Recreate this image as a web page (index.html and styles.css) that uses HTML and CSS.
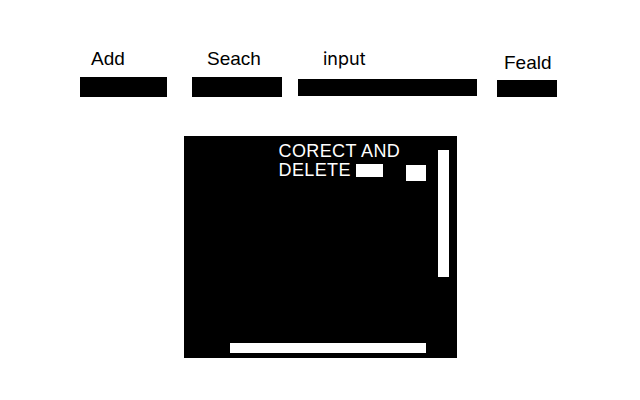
FILE: index.html
```html
<!DOCTYPE html>
<html lang="en">

<head>
    <meta charset="UTF-8">
    <meta name="viewport" content="width=device-width, initial-scale=1" />
    <title>Crud</title>
    <link rel="stylesheet" href="styles.css">
</head>

<body>

    <div class="toolbar">
        <div class="field field-add">
            <label>Add</label>
            <div class="box"></div>
        </div>
        <div class="field field-search">
            <label>Seach</label>
            <div class="box"></div>
        </div>
        <div class="field field-input">
            <label>input</label>
            <div class="box"></div>
        </div>
        <div class="field field-feald">
            <label>Feald</label>
            <div class="box"></div>
        </div>
    </div>

    <div class="panel">
        <div class="panel-main">
            <div class="panel-head">
                <div class="panel-title">
                    CORECT AND<br>
                    DELETE <span class="chip"></span>
                </div>
                <div class="square"></div>
            </div>
            <div class="hbar"></div>
        </div>
        <div class="vbar"></div>
    </div>

</body>

</html>
```

FILE: styles.css
```css
body {
    background-color: #fff;
    color: #000;
    font-family: 'Liberation Sans', Arial, sans-serif;
    font-size: 18px;
    margin: 0;
}

/* ====== TOP FIELDS ====== */

.toolbar {
    align-items: flex-start;
    display: flex;
    padding-top: 49px;
}

.field label {
    display: block;
    font-size: 19px;
    line-height: 20px;
}

.field .box {
    background-color: #000;
    height: 20px;
    margin-top: 8px;
}

.field-add {
    margin-left: 80px;
    width: 87px;
}

.field-add label {
    padding-left: 11px;
}

.field-search {
    margin-left: 25px;
    width: 90px;
}

.field-search label {
    padding-left: 15px;
}

.field-input {
    margin-left: 16px;
    width: 179px;
}

.field-input label {
    font-family: 'Inter', 'Liberation Sans', sans-serif;
    font-size: 18px;
    padding-left: 25px;
}

.field-feald {
    margin-left: 20px;
    margin-top: 4px;
    width: 60px;
}

.field-feald label {
    padding-left: 7px;
}

.field-input .box,
.field-feald .box {
    height: 17px;
    margin-top: 7px;
}

.field-input .box {
    margin-top: 10px;
}

/* ====== BLACK PANEL ====== */

.panel {
    background-color: #000;
    color: #fff;
    display: flex;
    height: 222px;
    margin: 39px auto 0;
    width: 273px;
}

.panel-main {
    display: flex;
    flex: 1;
    flex-direction: column;
    padding: 6px 0 5px 46px;
}

.panel-head {
    align-items: flex-start;
    display: flex;
}

.panel-title {
    letter-spacing: 0.4px;
    line-height: 19px;
    margin-left: 49px;
    white-space: nowrap;
}

.chip {
    background-color: #fff;
    display: inline-block;
    height: 13px;
    margin-bottom: -1px;
    width: 27px;
}

.square {
    background-color: #fff;
    height: 16px;
    margin-left: auto;
    margin-top: 23px;
    width: 20px;
}

.hbar {
    background-color: #fff;
    height: 10px;
    margin-top: auto;
}

.vbar {
    background-color: #fff;
    height: 127px;
    margin: 14px 8px 0 12px;
    width: 11px;
}
```
